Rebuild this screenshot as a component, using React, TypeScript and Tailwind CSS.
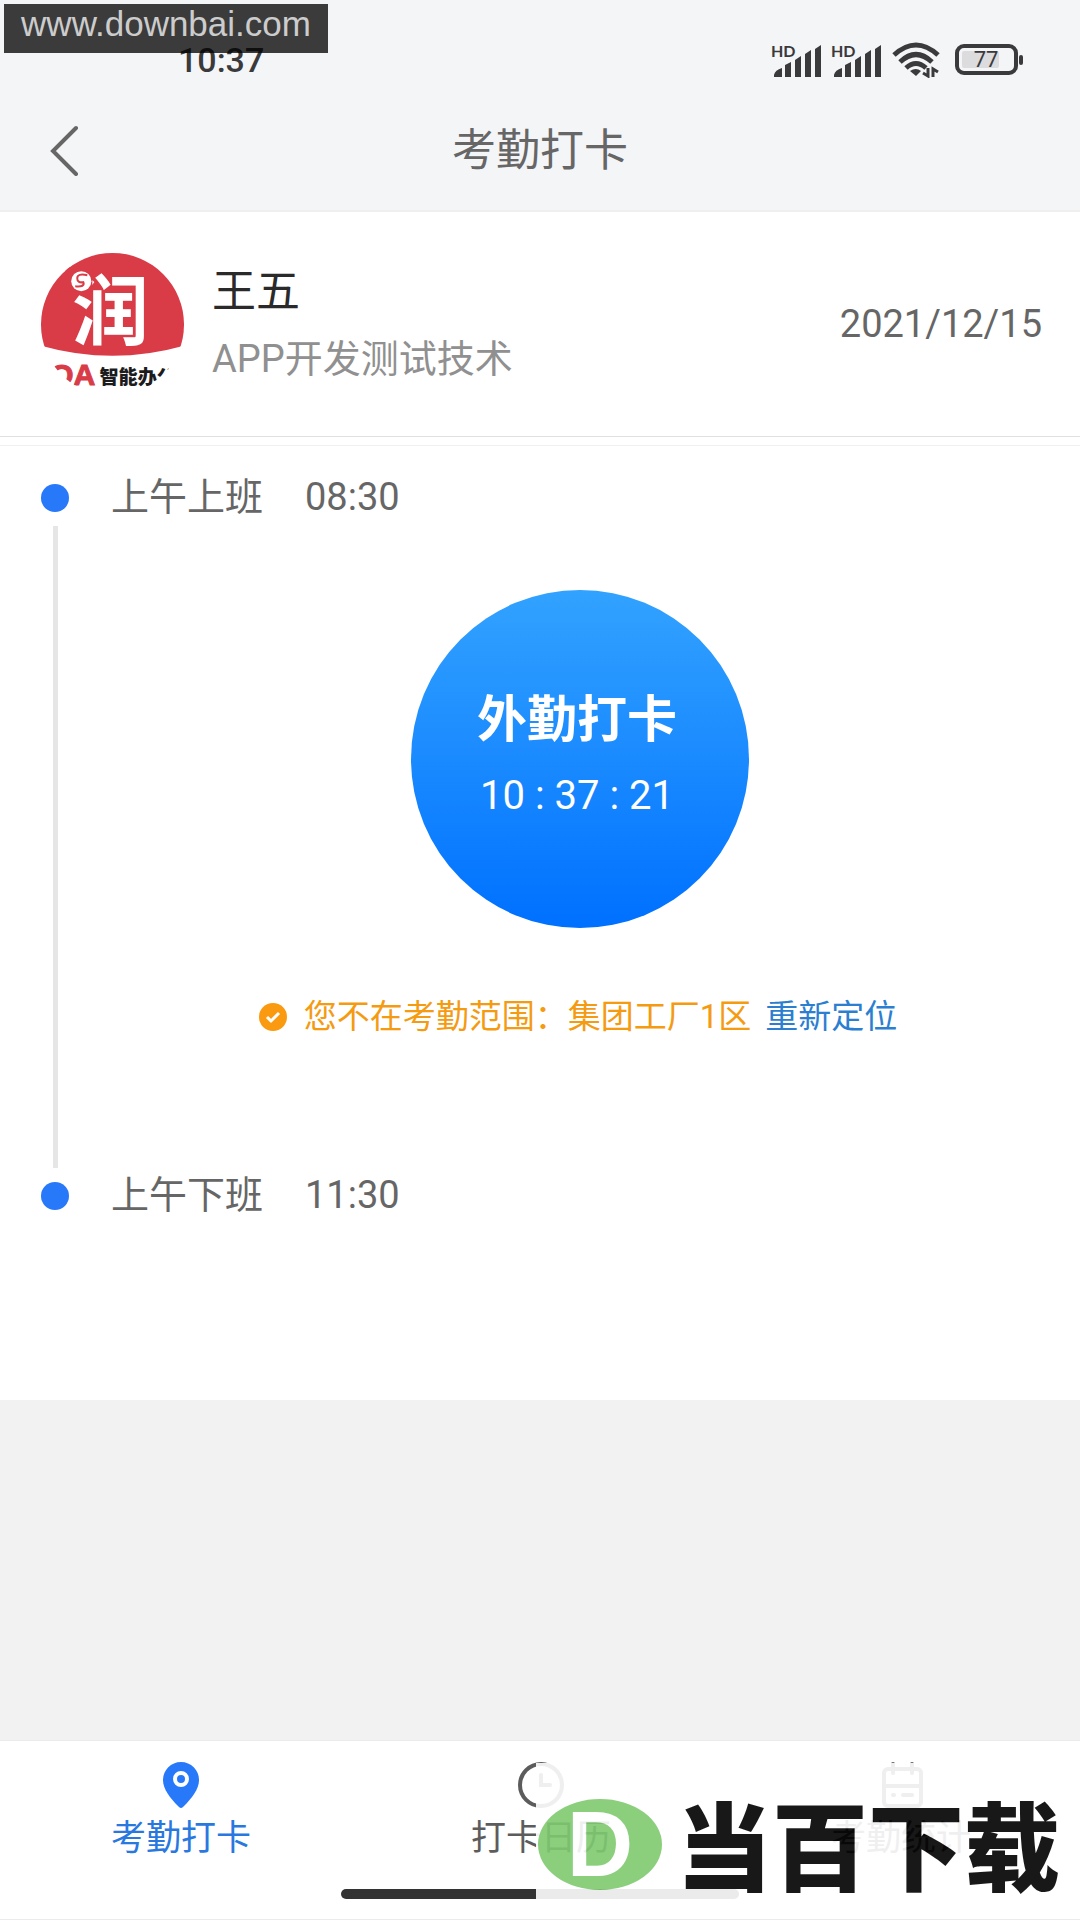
import React, { useState } from 'react';
import clsx from 'clsx';

const SignalIcon: React.FC = () => (
    <svg width="52" height="34" viewBox="0 0 52 34" fill="#3a3a3c" className="overflow-visible">
        <text x="-1" y="14" fontSize="16" fontWeight="700" fontFamily="Lato, sans-serif">HD</text>
        <path d="M2 34v-2q1-5 8-7v9zM13 34V22l6-3v15zM23 34V17l6-4v21zM33 34V11l6-4v27zM43 34V6l6-4v32z" />
    </svg>
);

const WifiIcon: React.FC = () => (
    <svg width="48" height="36" viewBox="0 0 48 36" fill="none" stroke="#3a3a3c" strokeWidth="5">
        <path d="M2 13Q24-7 46 13M8 20Q24 5 40 20M14 26q10-9 20 0" />
        <path d="M24 34l-6-5q6-4 11 0z" fill="#3a3a3c" stroke="none" />
        <path d="M36 26v8l-5-3M41 35v-8l5 3" strokeWidth="3" />
    </svg>
);

const BatteryIcon: React.FC = () => (
    <svg width="70" height="32" viewBox="0 0 70 32">
        <rect x="3" y="2" width="59" height="27" rx="7" fill="none" stroke="#3a3a3c" strokeWidth="4" />
        <rect x="8" y="7" width="37" height="17" rx="2" fill="#dcdcde" />
        <rect x="65" y="11" width="4" height="10" rx="2" fill="#3a3a3c" />
        <text x="32" y="23" fontSize="22" textAnchor="middle" fill="#3a3a3c" fontFamily="Roboto, sans-serif">77</text>
    </svg>
);

const Avatar: React.FC = () => (
    <svg width="143" height="143" viewBox="0 0 142 142" className="shrink-0">
        <defs>
            <clipPath id="avatar">
                <circle cx="71" cy="71" r="71" />
            </clipPath>
        </defs>
        <g clipPath="url(#avatar)">
            <rect width="142" height="142" fill="#fff" />
            <path d="M0 0h142v92q-71 20-142 0z" fill="#d93b47" />
            <text x="31" y="85" fontSize="76" fontWeight="700" fill="#fff" fontFamily="'Noto Sans CJK SC', sans-serif">润</text>
            <path d="M24 14h27v24H24z" fill="#d93b47" />
            <circle cx="40" cy="28" r="10" fill="#fff" />
            <path d="M46 22q-10-2-10 3t6 4q2 5-8 4" fill="none" stroke="#d93b47" strokeWidth="2" />
            <text x="9" y="131" fontSize="30" fontWeight="700" fill="#d93b47" stroke="#d93b47" strokeWidth="1" fontFamily="'Liberation Sans', sans-serif">OA</text>
            <text x="58" y="130" fontSize="19" fontWeight="900" fill="#1c1c1c" fontFamily="'Noto Sans CJK SC', sans-serif">智能办公</text>
        </g>
    </svg>
);

const PinIcon: React.FC = () => (
    <svg width="46" height="46" viewBox="0 0 46 46">
        <path d="M23 0C13 0 5 8 5 18c0 9 7 18 16 27q2 2 4 0c9-9 16-18 16-27C41 8 33 0 23 0z" fill="#2878fa" />
        <circle cx="23" cy="17" r="6" fill="#2878fa" stroke="#fff" strokeWidth="4" />
    </svg>
);

const ClockIcon: React.FC = () => (
    <svg width="46" height="46" viewBox="0 0 46 46" fill="none" stroke="currentColor" strokeWidth="4">
        <circle cx="23" cy="23" r="21" />
        <path d="M23 13v10h9" strokeLinecap="round" />
    </svg>
);

const CalendarIcon: React.FC = () => (
    <svg width="46" height="46" viewBox="0 0 46 46" fill="none" stroke="currentColor" strokeWidth="4" strokeLinecap="round">
        <rect x="6" y="7" width="37" height="37" rx="4" />
        <path d="M15 2v9M34 2v9M6 24h37M15 33h1M25 33h9" />
    </svg>
);

const tabs = [
    { label: '考勤打卡', icon: <PinIcon /> },
    { label: '打卡日历', icon: <ClockIcon /> },
    { label: '考勤统计', icon: <CalendarIcon /> },
];

const ShiftRow: React.FC<{ name: string; time: string }> = ({ name, time }) => (
    <div className="flex items-center h-14 text-[38px] leading-[54px] text-[#666]">
        <span className="size-7 rounded-full bg-[#2878fa] mr-[42px]" />
        <span className="pb-0.5">{name}</span>
        <time className="pb-0.5 ml-[42px]">{time}</time>
    </div>
);

const App: React.FC = () => {
    const [active, setActive] = useState(0);

    return (
        <div className="relative flex flex-col min-h-screen bg-[#f2f2f2] font-[Roboto,'Noto_Sans_CJK_SC',sans-serif]">
            <header className="bg-[#f4f5f7] border-b-2 border-[#efefef]">
                <div className="flex items-center justify-between h-[90px] pt-[30px] pl-[178px] pr-[56px]">
                    <span className="text-[34px] leading-[60px] font-medium text-[#3a3a3c]">10:37</span>
                    <div className="flex items-center gap-2">
                        <SignalIcon />
                        <SignalIcon />
                        <WifiIcon />
                        <span className="ml-1.5"><BatteryIcon /></span>
                    </div>
                </div>
                <div className="grid grid-cols-[100px_1fr_100px] items-center h-[120px]">
                    <button type="button" aria-label="返回" className="pl-[50px]">
                        <svg width="30" height="52" viewBox="0 0 30 52" fill="none" stroke="#666" strokeWidth="4" strokeLinecap="round">
                            <path d="M26 4L3 27l23 23" />
                        </svg>
                    </button>
                    <h1 className="pt-0.5 text-center text-[44px] leading-[60px] text-[#666]">考勤打卡</h1>
                </div>
            </header>

            <section className="flex items-center h-[225px] pl-[41px] pr-[38px] bg-white border-b border-[#e0e0e0]">
                <Avatar />
                <div className="flex-1 ml-7 pt-1 leading-[67px]">
                    <h2 className="text-[44px] text-[#2a2a2a]">王五</h2>
                    <p className="text-[38px] text-[#909090]">APP开发测试技术</p>
                </div>
                <time className="text-[38px] text-[#666]">2021/12/15</time>
            </section>

            <main className="mt-2 pt-6 pb-44 pl-[41px] pr-8 bg-white border-t border-[#f0f0f0] shadow-[0_-8px_0_#fff]">
                <ShiftRow name="上午上班" time="08:30" />
                <div className="flex">
                    <div className="flex justify-center w-7">
                        <span className="w-[5px] bg-[#e6e6e6]" />
                    </div>
                    <div className="flex flex-col items-center flex-1 ml-[43px] pt-16 pb-32">
                        <button
                            type="button"
                            className="flex flex-col items-center justify-center gap-4 size-[338px] rounded-full bg-linear-to-b from-[#32a2ff] to-[#0070ff] text-white pr-1.5 pb-0.5"
                        >
                            <span className="text-[50px] leading-[60px] font-bold">外勤打卡</span>
                            <span className="text-[40px] leading-[60px]">10 : 37 : 21</span>
                        </button>
                        <div className="flex items-center mt-[66px] pr-1 text-[33px] leading-[46px] whitespace-nowrap">
                            <svg width="28" height="28" viewBox="0 0 28 28" className="mr-[17px]">
                                <circle cx="14" cy="14" r="14" fill="#fa9a10" />
                                <path d="M8 14l4 4 8-8" fill="none" stroke="#fff" strokeWidth="3" />
                            </svg>
                            <span className="text-[#f49b12]">您不在考勤范围：集团工厂1区</span>
                            <a href="#" className="ml-3.5 text-[#2c7fd0]">重新定位</a>
                        </div>
                    </div>
                </div>
                <ShiftRow name="上午下班" time="11:30" />
            </main>

            <footer className="relative mt-auto pt-[21px] pb-5 bg-white border-y border-[#ebebeb]">
                <nav className="grid grid-cols-3">
                    {tabs.map((tab, i) => (
                        <button
                            key={tab.label}
                            type="button"
                            onClick={() => setActive(i)}
                            className={clsx('flex flex-col items-center gap-2 pl-0.5 text-[35px] leading-[46px]', i === active ? 'text-[#2878e0]' : 'text-[#5c5c5c]')}
                        >
                            {tab.icon}
                            <span>{tab.label}</span>
                        </button>
                    ))}
                </nav>
                <div className="w-[398px] h-2.5 mt-[27px] mx-auto rounded-full bg-[#333]" />

                {/* download site logo */}
                <div className="absolute right-0 bottom-0 flex items-center w-[544px] h-[156px] pl-0.5 bg-white opacity-90">
                    <div className="flex items-center justify-center w-[124px] h-[91px] mt-1.5 rounded-[50%] bg-[#7fca70]">
                        <span className="font-['Liberation_Sans',sans-serif] text-[92px] leading-[92px] font-bold text-white">D</span>
                    </div>
                    <span className="ml-3.5 mt-0.5 font-['Noto_Sans_CJK_SC',sans-serif] text-[96px] leading-[96px] font-black text-black whitespace-nowrap">当百下载</span>
                </div>
            </footer>

            <div className="absolute left-1 top-1 h-[49px] w-[324px] text-center bg-black/76 font-['Liberation_Sans',sans-serif] text-[35px] leading-[40px] text-[#ccc]">
                www.downbai.com
            </div>
        </div>
    );
};

export default App;
